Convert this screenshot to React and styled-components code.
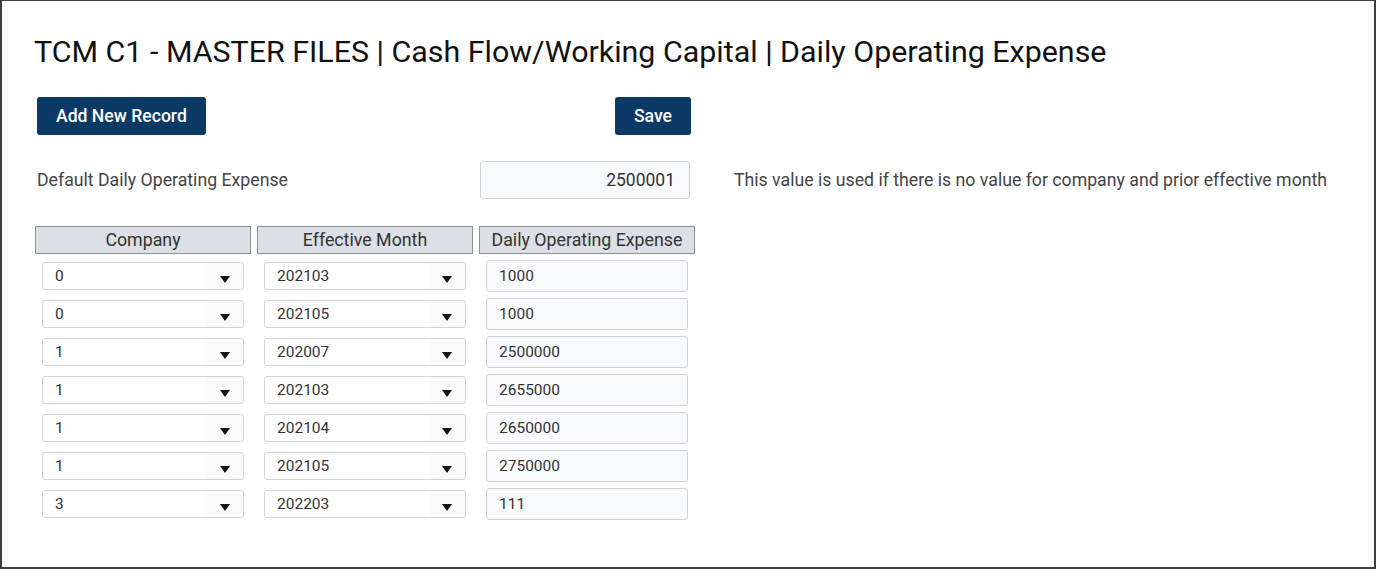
import React from "react";
import styled, { createGlobalStyle } from "styled-components";

const GlobalStyle = createGlobalStyle`
    html, body {
        margin: 0;
        padding: 0;
        background: #ffffff;
        font-family: Roboto, "Liberation Sans", sans-serif;
    }
    * {
        box-sizing: border-box;
    }
`;

const Frame = styled.div`
    width: 1376px;
    height: 569px;
    border: 1px solid #3d3d3d;
    border-right-width: 2px;
    border-bottom-width: 2px;
    border-left-width: 2px;
    padding: 0 0 0 32px;
    overflow: hidden;
`;

const Title = styled.h1`
    margin: 31px 0 0 0;
    font-size: 30.4px;
    font-weight: 400;
    line-height: 40px;
    color: #111;
`;

const Toolbar = styled.div`
    display: flex;
    justify-content: space-between;
    width: 654px;
    margin: 25px 0 0 3px;
`;

const Button = styled.button`
    height: 38px;
    padding: 0 19px;
    background-color: #0c3a67;
    color: #fff;
    border: none;
    border-radius: 3px;
    font-family: Roboto, "Liberation Sans", sans-serif;
    font-size: 17.6px;
    font-weight: 500;
    cursor: pointer;
`;

const DefaultRow = styled.div`
    display: flex;
    align-items: center;
    margin: 26px 0 0 3px;
`;

const Label = styled.div`
    width: 443px;
    font-size: 17.7px;
    color: #444;
`;

const Input = styled.input`
    width: ${(props) => props.width || "202px"};
    height: ${(props) => props.height || "32px"};
    padding: 0 ${(props) => props.padX || "12px"};
    background-color: #f9fafd;
    border: 1px solid #d0d2d6;
    border-radius: 3px;
    font-family: Roboto, "Liberation Sans", sans-serif;
    font-size: ${(props) => props.fontSize || "15.5px"};
    color: #333;
    text-align: ${(props) => props.align || "left"};
    outline: none;
`;

const Hint = styled.div`
    margin-left: 44px;
    font-size: 17.7px;
    color: #444;
`;

const Grid = styled.div`
    display: grid;
    grid-template-columns: repeat(3, 216px);
    column-gap: 6px;
    margin: 27px 0 0 1px;
`;

const HeaderCell = styled.div`
    height: 28px;
    margin-bottom: 3px;
    background-color: #dcdfe3;
    border: 1px solid #8b9097;
    font-size: 17.8px;
    line-height: 26px;
    color: #333;
    text-align: center;
    white-space: nowrap;
`;

const Cell = styled.div`
    height: 38px;
    display: flex;
    align-items: center;
    padding-left: 7px;
`;

const SelectBox = styled.div`
    position: relative;
    width: 202px;
    height: 28px;
    display: flex;
    align-items: center;
    padding-left: 12px;
    background: linear-gradient(to right, #fff 0, #fff 164px, #fafafa 164px, #fafafa 100%);
    border: 1px solid #d2d4d8;
    border-radius: 3px;
    font-size: 15.5px;
    color: #333;
`;

const Arrow = styled.span`
    position: absolute;
    right: 13px;
    top: 13px;
    width: 0;
    height: 0;
    border-left: 5px solid transparent;
    border-right: 5px solid transparent;
    border-top: 7px solid #111;
`;

const rows = [
    { company: "0", month: "202103", expense: "1000" },
    { company: "0", month: "202105", expense: "1000" },
    { company: "1", month: "202007", expense: "2500000" },
    { company: "1", month: "202103", expense: "2655000" },
    { company: "1", month: "202104", expense: "2650000" },
    { company: "1", month: "202105", expense: "2750000" },
    { company: "3", month: "202203", expense: "111" },
];

const Select = ({ value }) => (
    <SelectBox>
        {value}
        <Arrow />
    </SelectBox>
);

const App = () => {
    return (
        <>
            <GlobalStyle />
            <Frame>
                <Title>TCM C1 - MASTER FILES | Cash Flow/Working Capital | Daily Operating Expense</Title>
                <Toolbar>
                    <Button>Add New Record</Button>
                    <Button>Save</Button>
                </Toolbar>
                <DefaultRow>
                    <Label>Default Daily Operating Expense</Label>
                    <Input
                        width="210px"
                        height="38px"
                        padX="14px"
                        fontSize="17.5px"
                        align="right"
                        defaultValue="2500001"
                    />
                    <Hint>This value is used if there is no value for company and prior effective month</Hint>
                </DefaultRow>
                <Grid>
                    <HeaderCell>Company</HeaderCell>
                    <HeaderCell>Effective Month</HeaderCell>
                    <HeaderCell>Daily Operating Expense</HeaderCell>
                    {rows.map((row, i) => (
                        <React.Fragment key={i}>
                            <Cell>
                                <Select value={row.company} />
                            </Cell>
                            <Cell>
                                <Select value={row.month} />
                            </Cell>
                            <Cell>
                                <Input defaultValue={row.expense} />
                            </Cell>
                        </React.Fragment>
                    ))}
                </Grid>
            </Frame>
        </>
    );
};

export default App;
